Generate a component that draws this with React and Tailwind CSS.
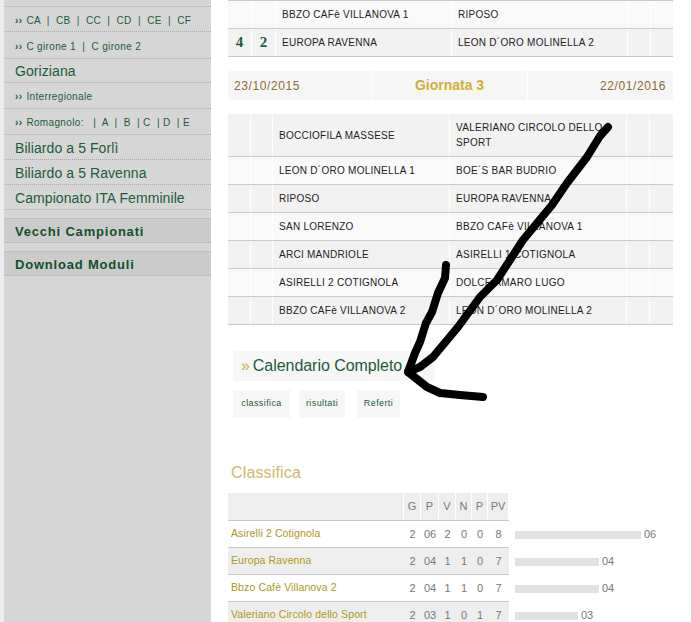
const GREEN = "text-[#1c5c38]";

const Match = ({ a, b, n1, n2, odd, tall, cols }) => (
  <div
    className={`grid border-b border-[#c8c8c8] ${tall ? "h-[43px]" : "h-[28px]"} ${odd ? "bg-[#f2f2f2]" : "bg-[#f9f9f9]"}`}
    style={{ gridTemplateColumns: cols }}
  >
    <div className="flex items-center justify-center border-r border-white font-['Liberation_Serif',serif] text-[15px] font-bold text-[#1c5c38]">{n1}</div>
    <div className="flex items-center justify-center border-r border-white font-['Liberation_Serif',serif] text-[15px] font-bold text-[#1c5c38]">{n2}</div>
    <div className="flex items-center border-r border-white pl-[6px] text-[10px] tracking-[0.27px] text-[#222]">{a}</div>
    <div className="flex items-center border-r border-white pl-[6px] text-[10px] leading-[15px] tracking-[0.27px] text-[#222]">{b}</div>
    <div className="border-r border-white" />
    <div />
  </div>
);

const SmallLink = ({ children, tall, short }) => (
  <div className={`flex items-center border-b border-dotted border-[#aaa] pl-[11px] pt-[2px] text-[10px] tracking-[0.35px] ${tall ? "h-[27px]" : short ? "h-[25px]" : "h-[26px]"} ${GREEN}`}>
    <span className="mr-[4px] text-[10px] font-bold">››</span>
    <span className="whitespace-pre">{children}</span>
  </div>
);

const BigLink = ({ children, short }) => (
  <div className={`flex items-center border-b border-dotted border-[#aaa] pl-[11px] pt-[2px] text-[14px] tracking-[0.08px] ${short ? "h-[24px]" : "h-[25px]"} ${GREEN}`}>
    {children}
  </div>
);

const Section = ({ children }) => (
  <div className="mt-[8px] flex h-[25px] items-center border-y border-[#bdbdbd] bg-[#cbcbcb] pl-[11px] pt-[2px] text-[13px] font-bold tracking-[0.8px] text-[#12502c]">
    {children}
  </div>
);

const standings = [
  ["Asirelli 2 Cotignola", "2", "06", "2", "0", "0", "8", 126],
  ["Europa Ravenna", "2", "04", "1", "1", "0", "7", 84],
  ["Bbzo Cafè Villanova 2", "2", "04", "1", "1", "0", "7", 84],
  ["Valeriano Circolo dello Sport", "2", "03", "1", "0", "1", "7", 63],
];

const secondTable = [
  ["LEON D´ORO MOLINELLA 1", "BOE´S BAR BUDRIO"],
  ["RIPOSO", "EUROPA RAVENNA"],
  ["SAN LORENZO", "BBZO CAFè VILLANOVA 1"],
  ["ARCI MANDRIOLE", "ASIRELLI 1 COTIGNOLA"],
  ["ASIRELLI 2 COTIGNOLA", "DOLCE AMARO LUGO"],
  ["BBZO CAFè VILLANOVA 2", "LEON D´ORO MOLINELLA 2"],
];

const topCols = "24px 24px 176px 176px 23px 22px";
const lowCols = "23px 22px 177px 177px 23px 23px";
const classCols = "176px 17px 18px 17px 16px 16px 21px";

export default function App() {
  return (
    <div className="relative flex h-[622px] w-[691px] overflow-hidden bg-white font-['Liberation_Sans',sans-serif]">
      <div className="w-[4px] shrink-0 bg-[#ececec]" />

      <div className="h-full w-[207px] shrink-0 bg-[#d6d6d6]">
        <div className="h-[7px] border-b border-dotted border-[#aaa]" />
        <SmallLink short>{"CA  |  CB  |  CC  |  CD  |  CE  |  CF"}</SmallLink>
        <SmallLink tall>{"C girone 1  |  C girone 2"}</SmallLink>
        <BigLink short>Goriziana</BigLink>
        <SmallLink>Interregionale</SmallLink>
        <SmallLink>{"Romagnolo:   |  A  |  B  | C  | D  | E"}</SmallLink>
        <BigLink>Biliardo a 5 Forlì</BigLink>
        <BigLink>Biliardo a 5 Ravenna</BigLink>
        <BigLink>Campionato ITA Femminile</BigLink>
        <Section>Vecchi Campionati</Section>
        <Section>Download Moduli</Section>
      </div>

      <div className="ml-[17px] w-[445px] shrink-0">
        <div className="border-t border-[#c8c8c8]">
          <Match a="BBZO CAFè VILLANOVA 1" b="RIPOSO" cols={topCols} />
          <Match a="EUROPA RAVENNA" b="LEON D´ORO MOLINELLA 2" n1="4" n2="2" odd cols={topCols} />
        </div>

        <div className="mt-[14px] grid h-[29px] grid-cols-[144px_156px_145px] bg-[#f6f6f6] text-[12px] tracking-[0.6px] text-[#8a6a32]">
          <div className="flex items-center border-r border-white pl-[6px]">23/10/2015</div>
          <div className="flex items-center justify-center border-r border-white text-[14px] font-bold tracking-normal text-[#cfae3a]">Giornata 3</div>
          <div className="flex items-center justify-end pr-[7px]">22/01/2016</div>
        </div>

        <div className="mt-[14px]">
          <Match tall a="BOCCIOFILA MASSESE" b="VALERIANO CIRCOLO DELLO SPORT" odd cols={lowCols} />
          {secondTable.map((row, i) => (
            <Match key={row[0]} a={row[0]} b={row[1]} odd={i % 2 === 1} cols={lowCols} />
          ))}
        </div>

        <div className="ml-[5px] mt-[26px] flex h-[30px] w-[202px] items-center bg-[#f6f6f6] pl-[8px] text-[16px] tracking-[-0.05px] text-[#1c5c38]">
          <span className="mr-[3px] text-[#c9ad4a]">»</span>Calendario Completo
        </div>

        <div className="ml-[5px] mt-[9px] flex text-[9px] tracking-[0.4px] text-[#1c5c38]">
          <div className="flex h-[28px] w-[57px] items-center justify-center bg-[#f6f6f6]">classifica</div>
          <div className="ml-[9px] flex h-[28px] w-[46px] items-center justify-center bg-[#f6f6f6]">risultati</div>
          <div className="ml-[12px] flex h-[28px] w-[43px] items-center justify-center bg-[#f6f6f6]">Referti</div>
        </div>

        <div className="ml-[3px] mt-[45px] h-[19px] text-[16px] leading-[19px] tracking-[0.15px] text-[#cdbb6a]">Classifica</div>

        <div className="mt-[11px] w-[281px]">
          <div className="grid h-[28px] border-b border-[#c8c8c8] bg-[#eeeeee] text-[11px] text-[#777]" style={{ gridTemplateColumns: classCols }}>
            {["", "G", "P", "V", "N", "P", "PV"].map((h, i) => (
              <div key={i} className="flex items-center justify-center border-r border-white">{h}</div>
            ))}
          </div>
          {standings.map((team, i) => (
            <div key={team[0]} className="relative">
              <div
                className={`grid h-[27px] border-b border-[#c8c8c8] text-[11px] ${i % 2 ? "bg-[#eeeeee]" : "bg-white"}`}
                style={{ gridTemplateColumns: classCols }}
              >
                <div className="flex items-center whitespace-nowrap pl-[3px] text-[10.5px] tracking-[0.12px] text-[#ae9820]">{team[0]}</div>
                {team.slice(1, 7).map((v, j) => (
                  <div key={j} className="flex items-center justify-center text-[#777]">{v}</div>
                ))}
              </div>
              <div className="absolute left-[287px] top-[9px] flex items-center whitespace-nowrap text-[11px] leading-[9px] text-[#777]">
                <div className="mr-[3px] h-[8px] bg-[#e2e2e2]" style={{ width: team[7] }} />
                {team[2]}
              </div>
            </div>
          ))}
        </div>
      </div>

      <svg className="absolute left-0 top-0" width="691" height="622" fill="none" stroke="#000" strokeWidth="8" strokeLinecap="round" strokeLinejoin="round">
        <path d="M608 127 L600 136 L587 157 L567 183 L552 205 L523 240 L497 280 L480 297 L458 327 L433 357 L420 367 L408 372" />
        <path d="M446 265 L445 278 L438 293 L432 312 L426 323 L420 342 L415 353 L408 372 L427 387 L440 393 L460 395 L483 397" />
      </svg>
    </div>
  );
}
